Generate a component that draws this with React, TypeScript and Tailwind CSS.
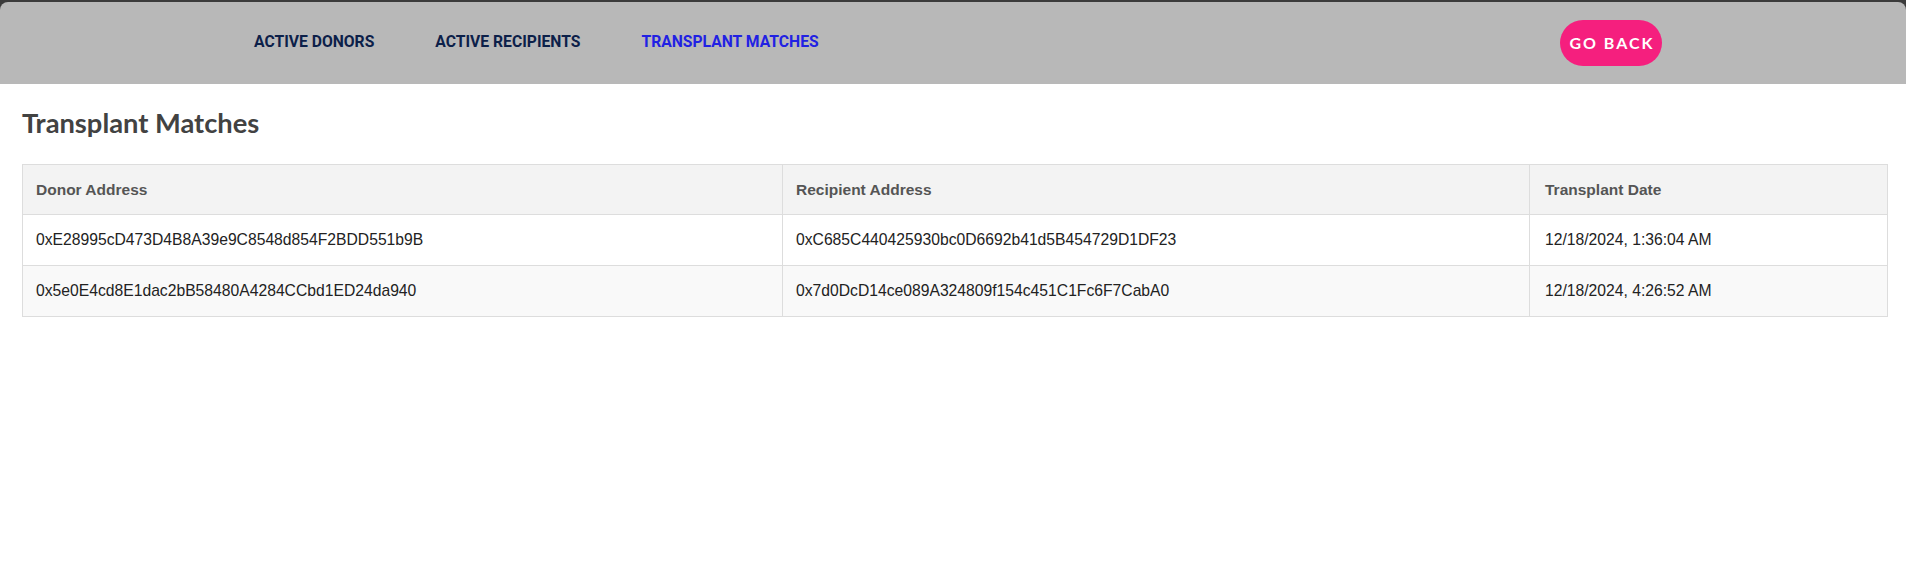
import React from "react";

const rows = [
  {
    donor: "0xE28995cD473D4B8A39e9C8548d854F2BDD551b9B",
    recipient: "0xC685C440425930bc0D6692b41d5B454729D1DF23",
    date: "12/18/2024, 1:36:04 AM",
    bg: "bg-white",
    h: "h-[51px]",
  },
  {
    donor: "0x5e0E4cd8E1dac2bB58480A4284CCbd1ED24da940",
    recipient: "0x7d0DcD14ce089A324809f154c451C1Fc6F7CabA0",
    date: "12/18/2024, 4:26:52 AM",
    bg: "bg-[#f9f9f9]",
    h: "h-[50px]",
  },
];

export default function App() {
  return (
    <div className="min-h-[587px] bg-white">
      <div className="bg-[#3b3b3b] pt-[2px]">
        <nav className="flex h-[82px] items-center rounded-t-[8px] bg-[#b8b8b8] pl-[254px] pr-[244px]">
          <div
            className="mb-[3px] flex items-center gap-[61px] text-[15.7px] font-bold leading-[20px]"
            style={{ fontFamily: "Roboto, 'Noto Sans', sans-serif" }}
          >
            <a className="text-[#0c2049]">ACTIVE DONORS</a>
            <a className="text-[#0c2049]">ACTIVE RECIPIENTS</a>
            <a className="text-[#2121e3]">TRANSPLANT MATCHES</a>
          </div>
          <button
            className="ml-auto flex h-[46px] w-[102px] items-center justify-center rounded-full bg-[#f51f7e] pl-[2px] text-[16px] font-bold tracking-[2px] text-white"
            style={{ fontFamily: "Lato, 'Open Sans', sans-serif" }}
          >
            GO BACK
          </button>
        </nav>
      </div>

      <main className="pl-[22px] pr-[18px]">
        <h2
          className="mt-[22px] mb-[24px] text-[27.3px] font-bold leading-[34px] text-[#424242]"
          style={{ fontFamily: "Lato, 'Open Sans', sans-serif" }}
        >
          Transplant Matches
        </h2>

        <div
          className="border border-[#dddddd] text-[15.7px]"
          style={{ fontFamily: "'Liberation Sans', Arial, sans-serif" }}
        >
          <div className="grid h-[50px] grid-cols-[759px_747px_1fr] border-b border-[#dddddd] bg-[#f3f3f3] text-[15.5px] font-bold text-[#555555]">
            <div className="flex items-center px-[13px]">Donor Address</div>
            <div className="flex items-center border-l border-[#dddddd] px-[13px]">Recipient Address</div>
            <div className="flex items-center border-l border-[#dddddd] px-[15px]">Transplant Date</div>
          </div>
          {rows.map((r, i) => (
            <div
              key={i}
              className={`grid grid-cols-[759px_747px_1fr] text-[#222222] ${r.bg} ${r.h} ${
                i < rows.length - 1 ? "border-b border-[#dddddd]" : ""
              }`}
            >
              <div className="flex items-center px-[13px]">{r.donor}</div>
              <div className="flex items-center border-l border-[#dddddd] px-[13px]">{r.recipient}</div>
              <div className="flex items-center border-l border-[#dddddd] px-[15px]">{r.date}</div>
            </div>
          ))}
        </div>
      </main>
    </div>
  );
}
